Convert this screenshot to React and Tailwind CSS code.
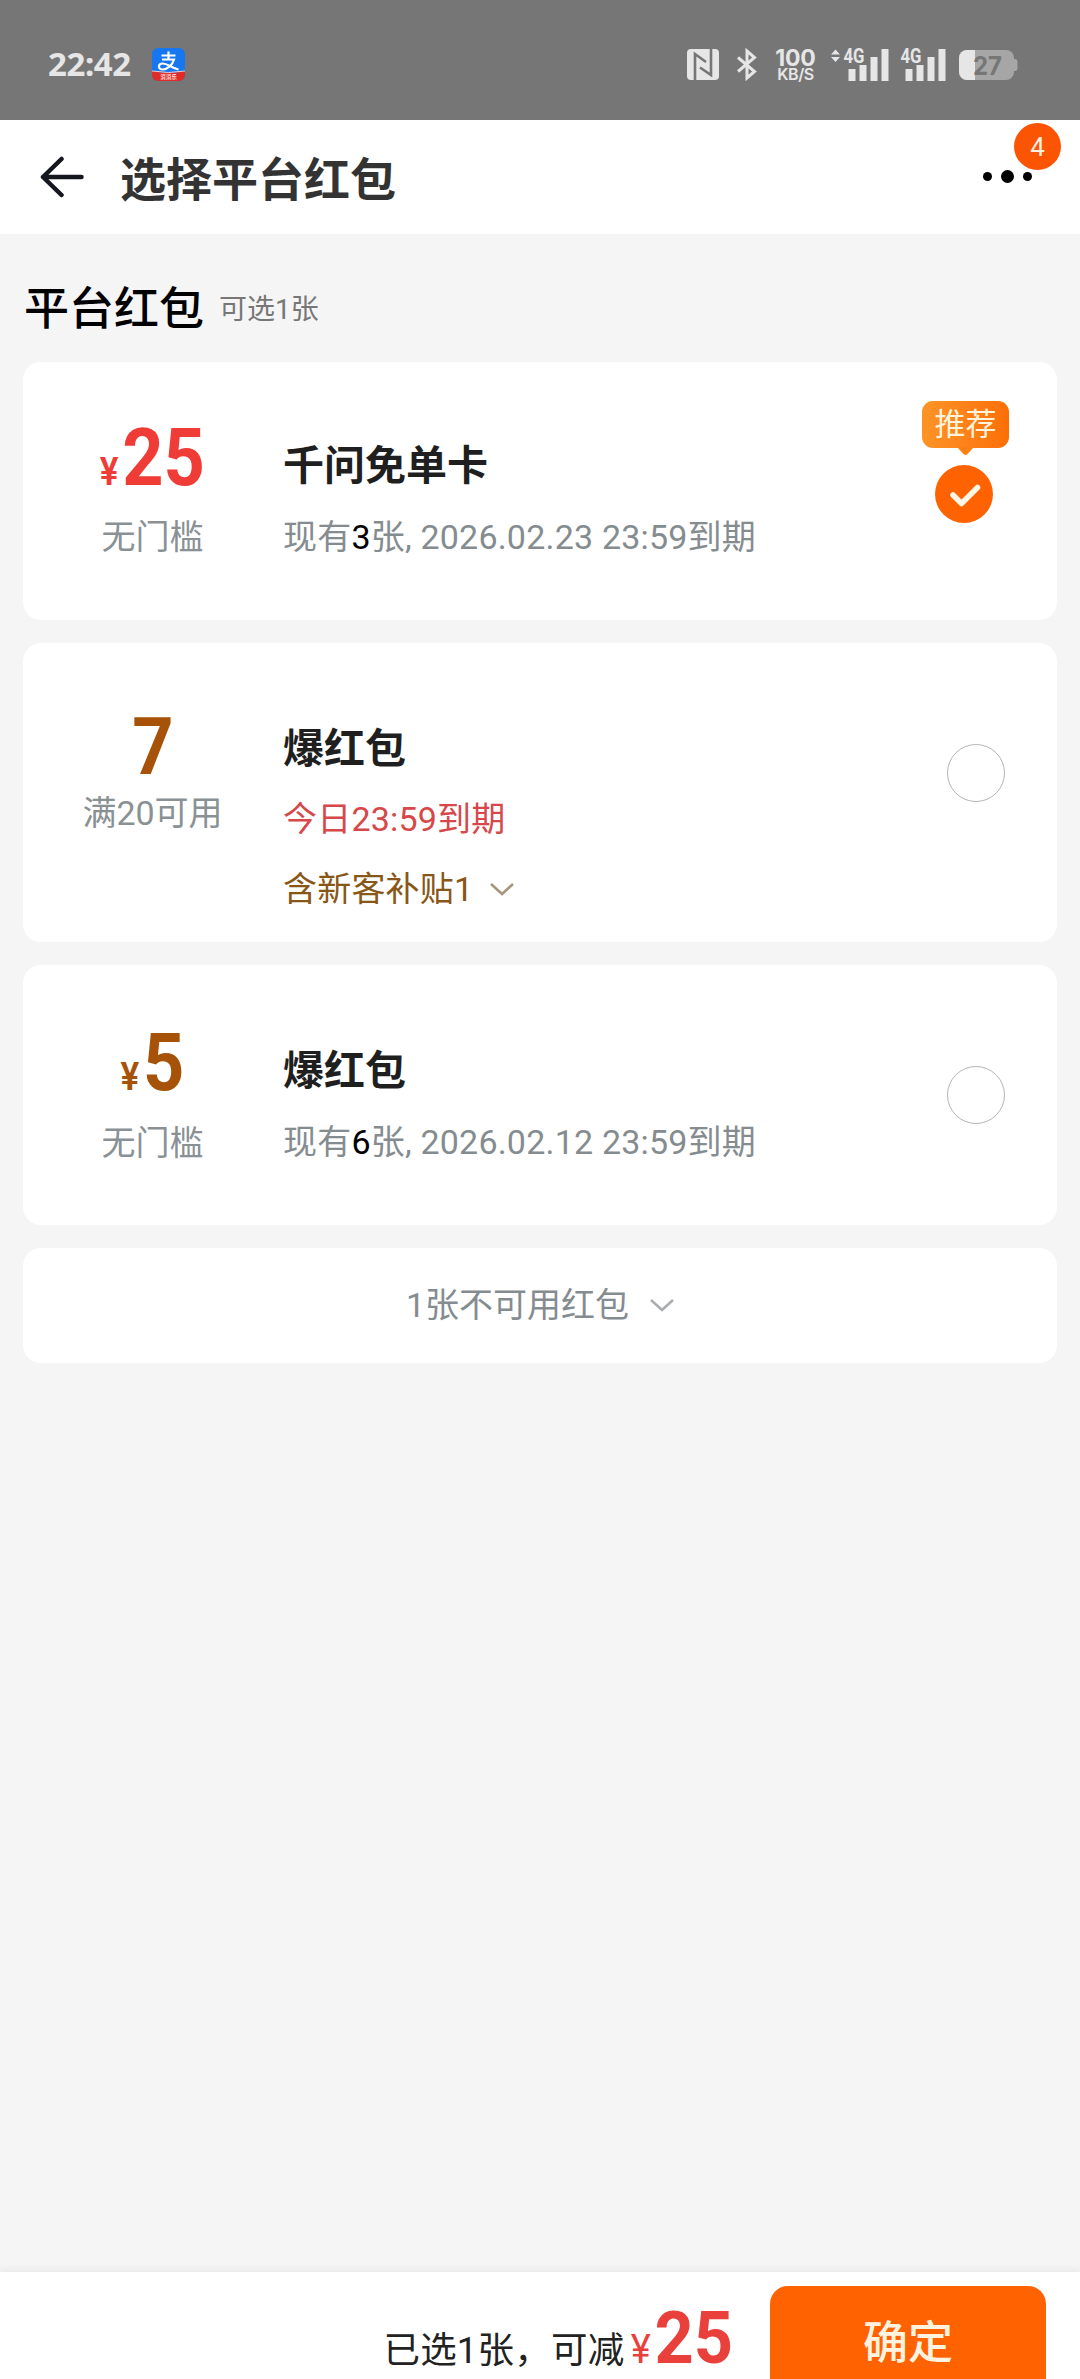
import React, { useState } from 'react';

const coupons = [
  {
    id: 1,
    yen: true,
    amount: '25',
    amountClass: 'text-[#f03c36]',
    limit: '无门槛',
    title: '千问免单卡',
    count: '3',
    expire: '2026.02.23 23:59到期',
    recommended: true,
    cardClass: 'h-[258px]',
    leftClass: 'pt-[56px]',
    limitClass: 'mt-[15px]',
    bodyClass: 'pt-[80px]',
  },
  {
    id: 2,
    yen: false,
    amount: '7',
    amountClass: 'text-[#a65208]',
    limit: '满20可用',
    title: '爆红包',
    today: '今日23:59到期',
    extra: '含新客补贴1',
    cardClass: 'h-[299px]',
    leftClass: 'pt-[64px]',
    limitClass: 'mt-[2px]',
    bodyClass: 'pt-[82px]',
  },
  {
    id: 3,
    yen: true,
    amount: '5',
    amountClass: 'text-[#a65208]',
    limit: '无门槛',
    title: '爆红包',
    count: '6',
    expire: '2026.02.12 23:59到期',
    cardClass: 'h-[260px]',
    leftClass: 'pt-[58px]',
    limitClass: 'mt-[16px]',
    bodyClass: 'pt-[82px]',
  },
];

const Chevron = ({ className }) => (
  <svg className={className} width="24" height="13" viewBox="0 0 24 13" fill="none" stroke="currentColor" strokeWidth="2.6">
    <path d="M1 1 L12 11 L23 1" />
  </svg>
);

const Signal = ({ arrows }) => (
  <svg className="overflow-visible" width="58" height="32" viewBox="0 0 58 32" fill="#e6e6e6">
    {arrows && <path d="M0 5.5 L4.5 0.5 L9 5.5 Z M0 8 L9 8 L4.5 13 Z" />}
    <text x="12.5" y="14" fontFamily="Roboto" fontWeight="700" fontSize="19.5" textLength="21" lengthAdjust="spacingAndGlyphs">4G</text>
    <rect x="17.5" y="20" width="7" height="12" />
    <rect x="28.5" y="16" width="7" height="16" />
    <rect x="39.5" y="8" width="7" height="24" />
    <rect x="50.5" y="0" width="7" height="32" />
  </svg>
);

const StatusBar = () => (
  <div className="flex h-[120px] shrink-0 items-start bg-[#767676] pt-[48px] pl-[48px]">
    <span className="w-[104px] font-['Noto_Sans'] text-[33px] leading-[32px] font-bold tracking-[-0.4px] text-[#e6e6e6]">22:42</span>

    {/* Alipay */}
    <svg className="overflow-visible" width="33" height="33" viewBox="0 0 33 33">
      <defs>
        <clipPath id="ali">
          <rect width="33" height="33" rx="6" />
        </clipPath>
      </defs>
      <g clipPath="url(#ali)">
        <rect width="33" height="33" fill="#1677f0" />
        <path d="M0 23 Q16.5 27 33 23 V33 H0 Z" fill="#e02b2b" />
        <path d="M0 23 Q16.5 26 33 23" stroke="#f3c9c9" strokeWidth="1" fill="none" />
      </g>
      <path d="M9.5 7.5 H23.5 M16.5 3.5 V11.5 M10 11.5 H22 C20.5 17 15 21.5 10.5 21.5 C5.5 21.5 6 15.5 10.5 15.5 C16 15.5 19 20 26.5 21.5" fill="none" stroke="#fff" strokeWidth="2.2" />
      <text x="16.5" y="31" textAnchor="middle" fontFamily="Noto Sans CJK SC" fontWeight="700" fontSize="5.5" fill="#ffdcd0">消消乐</text>
    </svg>

    <div className="ml-auto flex items-start pr-[62px]">
      {/* NFC */}
      <svg width="32" height="33" viewBox="0 0 32 33">
        <rect y="1" width="32" height="31" rx="4" fill="#e6e6e6" />
        <path d="M8 32 V6 L19 14 M24 1 V27 L13 19.5" fill="none" stroke="#767676" strokeWidth="2.6" />
      </svg>
      <svg className="ml-[17px]" width="22" height="33" viewBox="0 0 22 33" fill="none" stroke="#e6e6e6" strokeWidth="3">
        <path d="M2 9.5 L18.5 23.5 L11 30 V3 L18.5 9.5 L2 23.5" />
      </svg>
      <div className="ml-[16px] flex w-[43px] flex-col items-center pt-px font-[Inter] text-[#e6e6e6]">
        <span className="text-[23px] leading-[18px] font-bold tracking-[-0.2px]">100</span>
        <span className="text-[16px] leading-[15px] font-semibold tracking-[-0.4px]">KB/S</span>
      </div>
      <div className="mt-px ml-[14px] flex">
        <Signal arrows />
        <div className="-ml-px">
          <Signal />
        </div>
      </div>
      <svg className="ml-[13px] overflow-visible" width="59" height="33" viewBox="0 0 59 33">
        <defs>
          <clipPath id="bat">
            <rect y="2" width="55" height="30" rx="8" />
          </clipPath>
        </defs>
        <path d="M53 11 H56 Q58.5 11 58.5 14 V20 Q58.5 23 56 23 H53 Z" fill="#a6a6a6" />
        <g clipPath="url(#bat)">
          <rect y="2" width="55" height="30" fill="#a6a6a6" />
          <rect y="2" width="16" height="30" fill="#e6e6e6" />
        </g>
        <text x="14" y="26.5" fontFamily="Inter" fontWeight="700" fontSize="26" textLength="29" lengthAdjust="spacingAndGlyphs" fill="#767676">27</text>
      </svg>
    </div>
  </div>
);

const Header = () => (
  <div className="relative flex h-[114px] shrink-0 items-center bg-white pl-[40px]">
    <svg width="44" height="42" viewBox="0 0 44 42" fill="none" stroke="#15171f" strokeWidth="4.5" strokeLinecap="round" strokeLinejoin="round">
      <path d="M21.5 3 L3 21 L21.5 39 M3 21 H41.5" />
    </svg>
    <h1 className="mt-[5px] ml-[36px] text-[46px] leading-[60px] font-bold text-[#333]">选择平台红包</h1>
    <div className="mr-[48px] mb-[2px] ml-auto flex items-center gap-[9px]">
      <span className="size-[9px] rounded-full bg-black" />
      <span className="size-[13px] rounded-full bg-black" />
      <span className="size-[9px] rounded-full bg-black" />
    </div>
    <span className="absolute top-[3px] right-[19px] flex size-[47px] items-center justify-center rounded-full bg-[#fb5504] pt-[2px] text-[26px] text-[#fff0e0]">4</span>
  </div>
);

const Coupon = ({ data, selected, onSelect }) => (
  <div className={`flex rounded-[18px] bg-white ${data.cardClass}`} onClick={onSelect}>
    <div className={`flex w-[259px] flex-col items-center ${data.leftClass}`}>
      <div className={`flex scale-x-[0.9] items-baseline text-[80px] leading-[80px] font-bold ${data.amountClass}`}>
        {data.yen && <span className="mr-[4px] text-[39px] leading-none font-semibold">¥</span>}
        <span>{data.amount}</span>
      </div>
      <div className={`text-[34px] leading-[48px] text-[#899195] ${data.limitClass}`}>{data.limit}</div>
    </div>

    <div className={`pl-px leading-[48px] ${data.bodyClass}`}>
      <div className="text-[41px] font-bold text-[#1f1f1f]">{data.title}</div>
      {data.today ? (
        <div className="mt-[22px] text-[34px] tracking-[0.2px] text-[#d6484a]">{data.today}</div>
      ) : (
        <div className="mt-[23px] text-[34px] tracking-[0.2px] text-[#858c90]">
          现有<span className="text-black">{data.count}</span>张, {data.expire}
        </div>
      )}
      {data.extra && (
        <div className="mt-[22px] flex items-center text-[34px] tracking-[0.2px] text-[#885717]">
          {data.extra}
          <Chevron className="ml-[17px] text-[#a5957c]" />
        </div>
      )}
    </div>

    {data.recommended ? (
      <div className="mr-[48px] ml-auto flex flex-col items-center pt-[39px]">
        <div className="relative flex h-[47px] w-[87px] items-center justify-center rounded-[11px] bg-linear-to-r from-[#fd9426] to-[#fb6f05] pt-[2px] text-[31px] text-[#fff3dc]">
          推荐
          <svg className="absolute top-[46px] left-[35px]" width="17" height="9" viewBox="0 0 17 9">
            <path d="M0 0 H17 L10.5 7 Q8.5 9 6.5 7 Z" fill="#fb8013" />
          </svg>
        </div>
        <Radio checked={selected} className="mt-[17px] mr-[3px]" />
      </div>
    ) : (
      <Radio checked={selected} className="mt-[101px] mr-[52px] ml-auto" />
    )}
  </div>
);

const Radio = ({ checked, className }) =>
  checked ? (
    <svg className={className} width="58" height="58" viewBox="0 0 58 58" fill="none">
      <circle cx="29" cy="29" r="29" fill="#ff6200" />
      <path d="M18 30 L26.5 38.5 L42.5 22.5" stroke="#fff6e6" strokeWidth="5.5" strokeLinecap="round" strokeLinejoin="round" />
    </svg>
  ) : (
    <span className={`size-[58px] rounded-full border-[1.5px] border-[#b5b5b5] ${className}`} />
  );

export default function App() {
  const [selected, setSelected] = useState(1);

  return (
    <div className="flex h-[2379px] w-[1080px] flex-col overflow-hidden bg-[#f5f5f5] font-[Roboto,'Noto_Sans_CJK_SC',sans-serif]">
      <StatusBar />
      <Header />

      <main className="flex-1 px-[23px] pt-[46px]">
        <div className="flex h-[60px] items-center pl-[1px]">
          <h2 className="text-[45px] leading-[60px] font-medium text-black">平台红包</h2>
          <span className="ml-[15px] text-[28px] text-[#777]">可选1张</span>
        </div>

        <div className="mt-[22px] flex flex-col gap-[23px]">
          {coupons.map((c) => (
            <Coupon key={c.id} data={c} selected={selected === c.id} onSelect={() => setSelected(c.id)} />
          ))}
          <div className="flex h-[115px] items-center justify-center rounded-[18px] bg-white text-[34px] text-[#858c90]">
            1张不可用红包
            <Chevron className="ml-[21px] text-[#a8adaf]" />
          </div>
        </div>
      </main>

      {/* bottom bar */}
      <footer className="flex h-[107px] shrink-0 items-start justify-end bg-white pr-[34px] shadow-[0_-2px_8px_rgba(0,0,0,0.06)]">
        <div className="mt-[31px] flex items-baseline leading-[72px]">
          <span className="text-[36.5px] tracking-[0.2px] text-[#222]">已选1张，可减</span>
          <div className="flex origin-left scale-x-[0.95] items-baseline text-[#ea403c]">
            <span className="ml-[7px] text-[40px]">¥</span>
            <span className="ml-[4px] text-[72px] font-bold">25</span>
          </div>
        </div>
        <button className="mt-[14px] ml-[31px] h-[116px] w-[276px] shrink-0 rounded-[18px] bg-[#ff6200] text-[45px] font-medium text-[#fff3e0]">
          确定
        </button>
      </footer>
    </div>
  );
}
